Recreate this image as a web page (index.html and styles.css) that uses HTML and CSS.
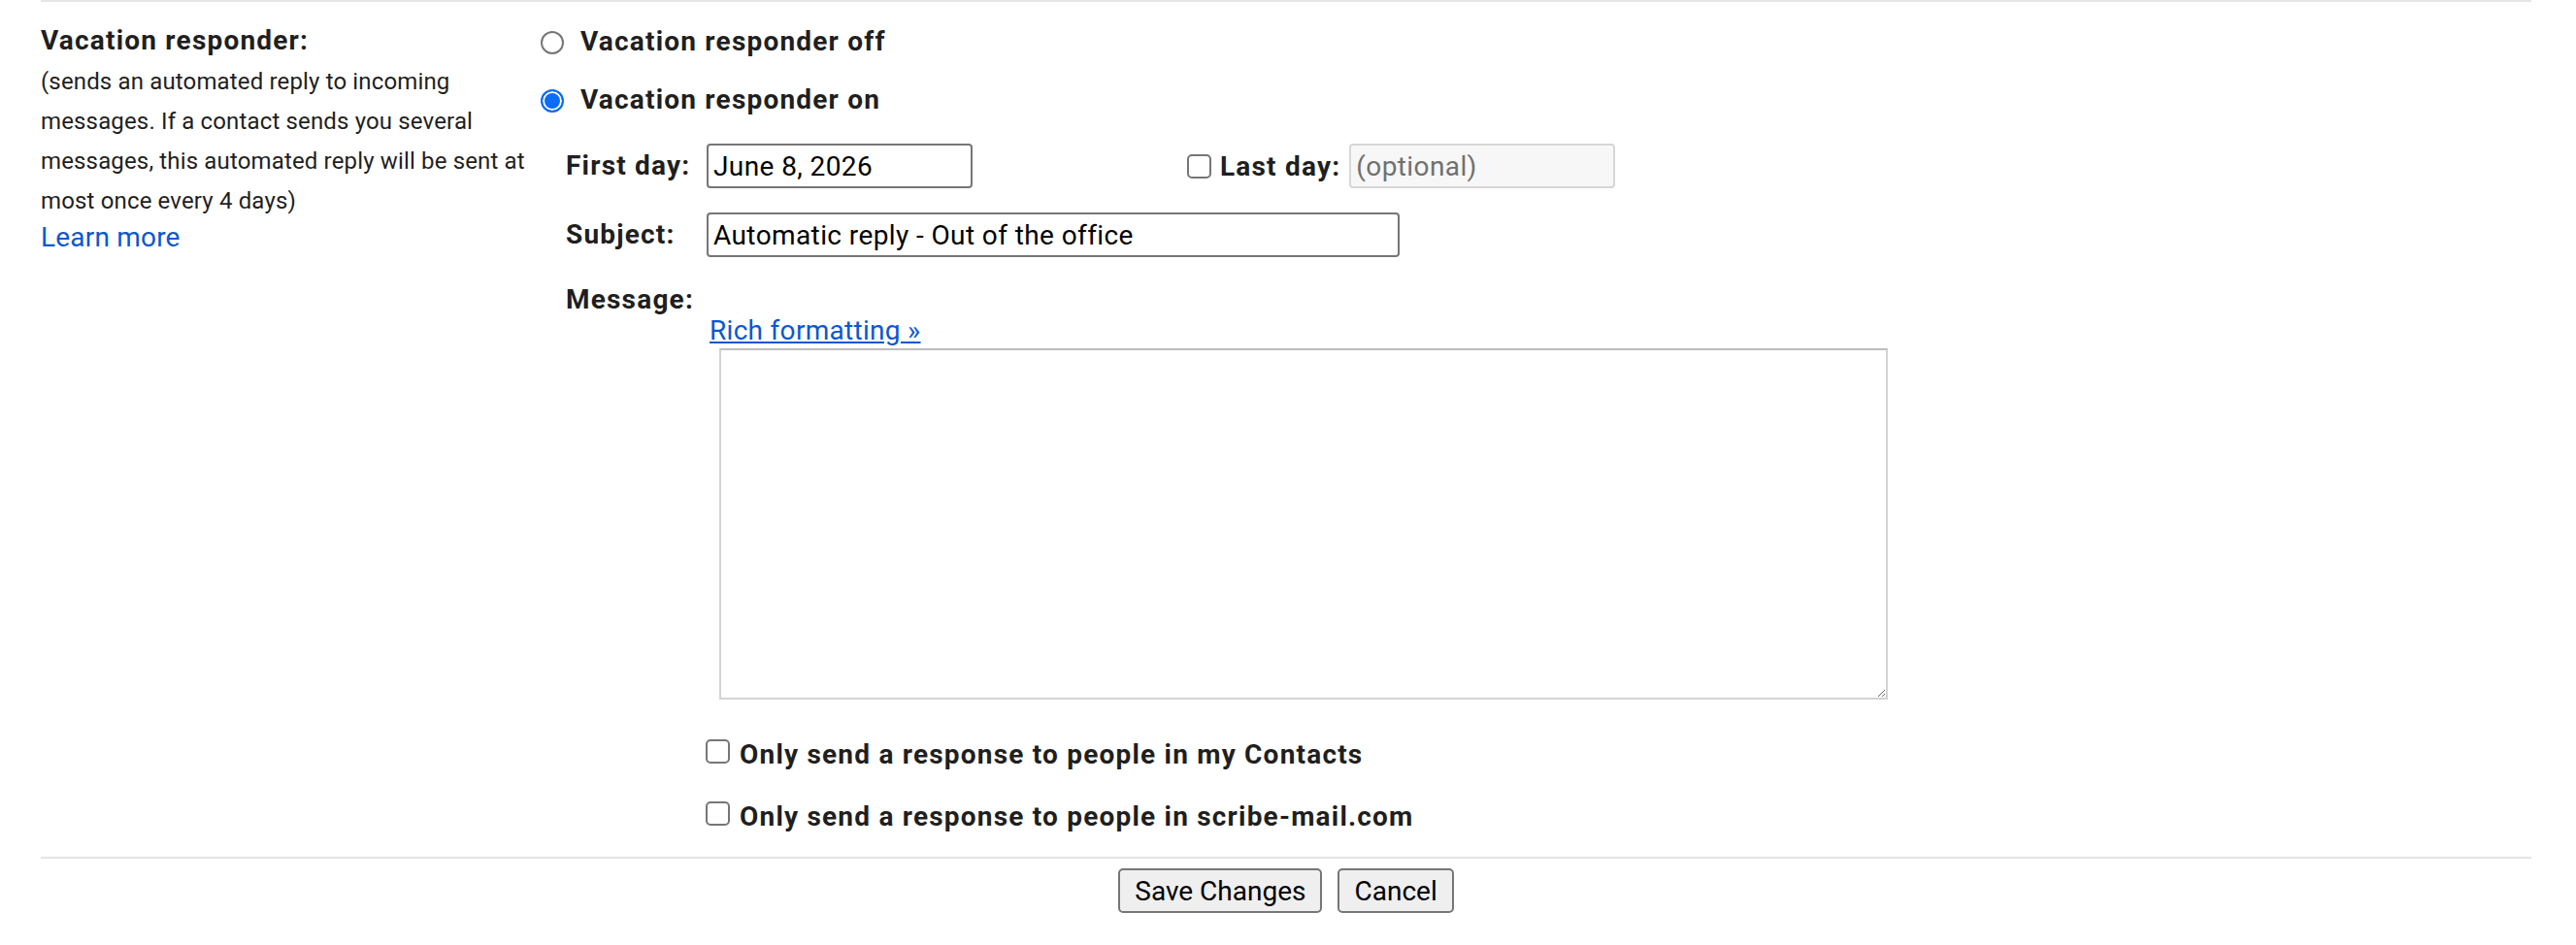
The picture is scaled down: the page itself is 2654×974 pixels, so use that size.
FILE: index.html
```html
<!DOCTYPE html>
<html lang="en">
<head>
    <meta charset="UTF-8">
    <meta name="viewport" content="width=device-width, initial-scale=1.0">
    <title>Settings - Vacation responder</title>
    <link rel="stylesheet" href="styles.css">
</head>
<body>
    <div class="settings">
        <div class="setting-row">
            <div class="setting-label">
                <div class="label-title">Vacation responder:</div>
                <div class="label-hint">(sends an automated reply to incoming messages. If a contact sends you several messages, this automated reply will be sent at most once every 4 days)</div>
                <a class="learn-more" href="#">Learn more</a>
            </div>

            <div class="setting-body">
                <label class="radio-row"><input class="radio" type="radio" name="vacation">Vacation responder off</label>
                <label class="radio-row"><input class="radio" type="radio" name="vacation" checked>Vacation responder on</label>

                <div class="fields">
                    <div class="field-row">
                        <span class="field-label">First day:</span>
                        <input class="text-input date-input" type="text" value="June 8, 2026">
                        <label class="last-day"><input class="checkbox" type="checkbox">Last day:</label>
                        <input class="text-input date-input" type="text" placeholder="(optional)" disabled>
                    </div>
                    <div class="field-row">
                        <span class="field-label">Subject:</span>
                        <input class="text-input subject-input" type="text" value="Automatic reply - Out of the office">
                    </div>

                    <div class="field-label message-label">Message:</div>
                    <div class="message-box">
                        <a class="rich-link" href="#">Rich formatting &raquo;</a>
                        <textarea class="message-text"></textarea>
                    </div>

                    <div class="check-options">
                        <label class="check-row"><input class="checkbox" type="checkbox">Only send a response to people in my Contacts</label>
                        <label class="check-row"><input class="checkbox" type="checkbox">Only send a response to people in scribe-mail.com</label>
                    </div>
                </div>
            </div>
        </div>

        <div class="actions">
            <button class="btn">Save Changes</button>
            <button class="btn">Cancel</button>
        </div>
    </div>
</body>
</html>
```

FILE: styles.css
```css
* {
    box-sizing: border-box;
}

body {
    margin: 0;
    background: #fff;
    color: #1f1f1f;
    font-family: Roboto, "Liberation Sans", Arial, sans-serif;
}

.settings {
    margin: 0 46px 0 42px;
    border-top: 2px solid #e5e5e5;
}

.setting-row {
    display: flex;
    padding-top: 20px;
}

/* left column */
.setting-label {
    width: 514px;
    flex-shrink: 0;
}

.label-title {
    font-size: 28px;
    font-weight: 700;
    line-height: 40px;
    letter-spacing: 1.2px;
}

.label-hint {
    margin-top: 2px;
    font-size: 24px;
    line-height: 41px;
    letter-spacing: 0.15px;
}

.learn-more {
    display: block;
    font-size: 28px;
    line-height: 34px;
    letter-spacing: 0.2px;
    color: #0b57d0;
    text-decoration: none;
}

/* right column */
.setting-body {
    flex: 1;
}

.radio-row {
    display: flex;
    align-items: center;
    gap: 17px;
    height: 40px;
    font-size: 28px;
    font-weight: 700;
    letter-spacing: 1.2px;
}

.radio-row + .radio-row {
    margin-top: 20px;
}

.radio {
    appearance: none;
    width: 24px;
    height: 24px;
    margin: 4px 0 0 1px;
    border: 2px solid #767676;
    border-radius: 50%;
    background: #fff;
    flex-shrink: 0;
}

.radio:checked {
    border-color: #0b6cf4;
    background: #0b6cf4;
    box-shadow: inset 0 0 0 2px #fff;
}

.checkbox {
    appearance: none;
    width: 25px;
    height: 25px;
    margin: 0;
    border: 2px solid #767676;
    border-radius: 5px;
    background: #fff;
    flex-shrink: 0;
}

.fields {
    margin: 26px 0 0 27px;
}

.field-row {
    display: flex;
    align-items: center;
    height: 46px;
}

.field-row + .field-row {
    margin-top: 25px;
}

.field-label {
    width: 145px;
    flex-shrink: 0;
    font-size: 28px;
    font-weight: 700;
    line-height: 40px;
    letter-spacing: 1.2px;
}

.text-input {
    height: 46px;
    padding: 0 5px;
    border: 2px solid #767676;
    border-radius: 4px;
    font-family: Roboto, "Liberation Sans", Arial, sans-serif;
    font-size: 28px;
    letter-spacing: 0.4px;
    color: #000;
    background: #fff;
}

.text-input:disabled {
    background: #f7f7f7;
    border-color: #d6d6d6;
}

.text-input::placeholder {
    color: #707070;
    opacity: 1;
}

.date-input {
    width: 274px;
}

.subject-input {
    width: 714px;
}

.last-day {
    display: flex;
    align-items: center;
    gap: 9px;
    margin: 0 9px 0 221px;
    font-size: 28px;
    font-weight: 700;
    letter-spacing: 1.2px;
}

.message-label {
    margin-top: 26px;
    line-height: 36px;
}

.message-box {
    margin-left: 145px;
}

.rich-link {
    display: block;
    width: fit-content;
    margin-left: 3px;
    font-size: 28px;
    line-height: 28px;
    letter-spacing: 0.3px;
    color: #0b57d0;
}

.message-text {
    display: block;
    width: 1204px;
    height: 362px;
    margin: 4px 0 0 13px;
    border: 2px solid #d3d3d3;
    border-top-color: #bdbdbd;
    font-family: Roboto, "Liberation Sans", Arial, sans-serif;
    font-size: 24px;
}

.check-options {
    margin: 37px 0 0 144px;
}

.check-row {
    display: flex;
    align-items: flex-start;
    gap: 10px;
    font-size: 28px;
    font-weight: 700;
    line-height: 40px;
    letter-spacing: 1.2px;
}

.check-row .checkbox {
    margin-top: 4px;
}

.check-row + .check-row {
    margin-top: 24px;
}

/* bottom buttons */
.actions {
    display: flex;
    justify-content: center;
    gap: 16px;
    margin-top: 21px;
    padding-top: 10px;
    border-top: 2px solid #e5e5e5;
}

.btn {
    height: 46px;
    padding: 0 15px;
    border: 2px solid #767676;
    border-radius: 5px;
    background: #efefef;
    color: #000;
    font-family: Roboto, "Liberation Sans", Arial, sans-serif;
    font-size: 28px;
}
```
